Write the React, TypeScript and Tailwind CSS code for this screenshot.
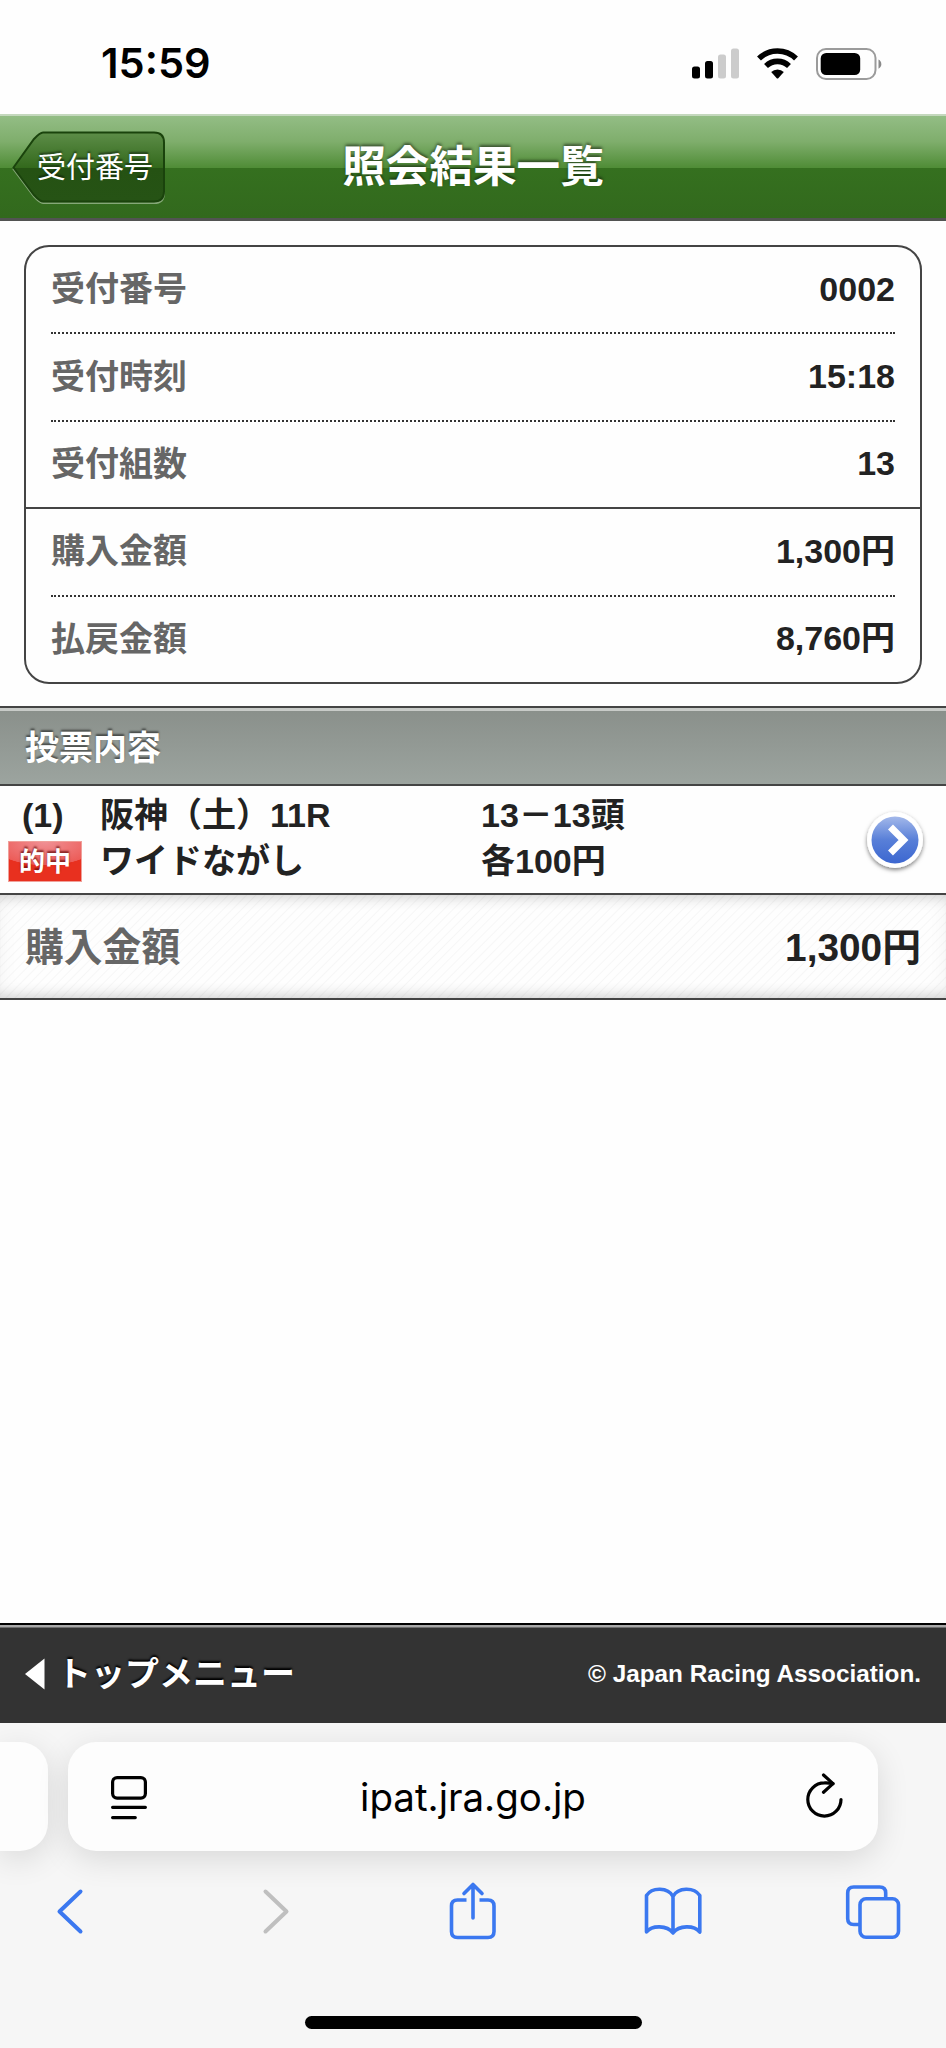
import React from 'react';

interface Row {
    label: string;
    value: string;
    line?: 'dotted' | 'solid';
}

const rows: Row[] = [
    { label: '受付番号', value: '0002', line: 'dotted' },
    { label: '受付時刻', value: '15:18', line: 'dotted' },
    { label: '受付組数', value: '13', line: 'solid' },
    { label: '購入金額', value: '1,300円', line: 'dotted' },
    { label: '払戻金額', value: '8,760円' },
];

const StatusBar: React.FC = () => (
    <div className="flex h-[114px] items-center justify-between pl-[101px] pr-[64px] pt-[13px]">
        <span className="font-['Inter',sans-serif] text-[41.500px] leading-none font-semibold text-black">15:59</span>
        <div className="flex items-center gap-[18px]">
            <svg width="47" height="31" viewBox="0 0 47 31">
                <rect x="0" y="18.5" width="8" height="12" rx="2.5" fill="#000" />
                <rect x="13" y="13" width="8" height="17.5" rx="2.5" fill="#000" />
                <rect x="26" y="6.5" width="8" height="24" rx="2.5" fill="#ccc" />
                <rect x="39" y="0.5" width="8" height="30" rx="2.5" fill="#ccc" />
            </svg>
            <svg width="41" height="31" viewBox="0 0 41 31">
                <path d="M2 10.5a26.5 26.5 0 0 1 37 0" fill="none" stroke="#000" strokeWidth="5.6" />
                <path d="M9 18a16.5 16.5 0 0 1 23 0" fill="none" stroke="#000" strokeWidth="5.6" />
                <path d="M14.2 24a9 9 0 0 1 12.6 0l-5.3 5.9q-1 1-2 0z" fill="#000" />
            </svg>
            <svg width="66" height="32" viewBox="0 0 66 32">
                <rect x="1" y="1" width="58.5" height="30" rx="9" fill="none" stroke="#9b9b9b" strokeWidth="2" />
                <rect x="4.7" y="5" width="39.5" height="22" rx="5.5" fill="#000" />
                <path d="M62.500 11.500c3.800 1.600 3.800 7.600 0 9.200z" fill="#8a8a8a" />
            </svg>
        </div>
    </div>
);

const Header: React.FC = () => (
    <header className="grid h-[107px] grid-cols-[160px_1fr_160px] items-center border-t-2 border-b-3 border-t-[#c4d8bd] border-b-[#525352] bg-[linear-gradient(#93bd85_0%,#7fae6c_25%,#4f8c36_51%,#35701f_51%,#32691d_100%)] px-[12px]">
        <button className="relative mt-px flex h-[74px] w-[154px] items-center">
            <svg className="absolute inset-0" width="154" height="74" viewBox="0 0 154 74">
                <defs>
                    <linearGradient id="back" x1="0" y1="0" x2="0" y2="1">
                        <stop offset="0" stopColor="#5d8d48" />
                        <stop offset="0.51" stopColor="#33691c" />
                        <stop offset="0.52" stopColor="#255213" />
                        <stop offset="1" stopColor="#265315" />
                    </linearGradient>
                </defs>
                <path
                    d="M1.5 36.5L22 8Q28 1.5 31 1.5H142Q152 1.5 152 11.5V60.5Q152 70.500 142 70.500H31Q28 70.500 22 64z"
                    transform="translate(0 1.7)"
                    fill="none"
                    stroke="#86a878"
                    strokeWidth="1.8"
                />
                <path
                    d="M1.5 36.5L22 8Q28 1.5 31 1.5H142Q152 1.5 152 11.5V60.5Q152 70.500 142 70.500H31Q28 70.500 22 64z"
                    fill="url(#back)"
                    stroke="#1a430c"
                    strokeWidth="2"
                />
            </svg>
            <span className="relative pt-px pl-[25px] text-[29px] leading-none text-white [text-shadow:0_-2px_2px_rgba(0,0,0,0.5)]">受付番号</span>
        </button>
        <h1 className="pt-px text-center text-[43.600px] leading-none font-bold text-white [text-shadow:0_-2px_3px_rgba(0,0,0,0.5)]">照会結果一覧</h1>
    </header>
);

const Summary: React.FC = () => (
    <div className="mx-[24px] mt-[24px] h-[439px] rounded-[25px] border-2 border-[#444]">
        {rows.map(row => (
            <div key={row.label} className={row.line === 'solid' ? 'border-b-2 border-[#444]' : ''}>
                <div
                    className={`mx-[25px] flex items-center justify-between text-[34px] leading-none font-bold ${
                        row.line === 'dotted' ? 'h-[87.400px] border-b-2 border-dotted border-[#333]' : 'h-[85.400px]'
                    }`}
                >
                    <span className="pb-px text-[#666]">{row.label}</span>
                    <span className="pb-[2px] text-[#222]">{row.value}</span>
                </div>
            </div>
        ))}
    </div>
);

const Ticket: React.FC = () => (
    <div className="flex h-[109px] border-b-2 border-[#444] text-[34px] leading-[46px] font-bold text-[#222]">
        <div className="flex w-[100px] flex-col pt-[6px]">
            <span className="pl-[22px]">(1)</span>
            <span className="mt-[3px] ml-[8px] flex h-[41px] w-[74px] items-center justify-center border border-[#f0a09a] bg-[radial-gradient(ellipse_75%_60%_at_50%_0%,#f09094_0%,#ec5c58_98%,#e8301f_100%)] text-[26px] leading-none text-white [text-shadow:0_-2px_2px_rgba(90,0,0,0.7)]">
                的中
            </span>
        </div>
        <div className="flex w-[381px] flex-col pt-[6px]">
            <span>阪神（土）11R</span>
            <span>ワイドながし</span>
        </div>
        <div className="flex flex-1 flex-col pt-[6px]">
            <span>13－13頭</span>
            <span>各100円</span>
        </div>
        <div className="flex items-center pt-[2px] pr-[18px]">
            <svg width="66" height="70" viewBox="0 0 66 70">
                <defs>
                    <linearGradient id="go" x1="0" y1="0" x2="0" y2="1">
                        <stop offset="0" stopColor="#a3b8ea" />
                        <stop offset="0.5" stopColor="#587fd8" />
                        <stop offset="1" stopColor="#3c67d0" />
                    </linearGradient>
                    <filter id="drop" x="-20%" y="-20%" width="140%" height="150%">
                        <feDropShadow dx="0" dy="2" stdDeviation="2" floodColor="#000" floodOpacity="0.5" />
                    </filter>
                </defs>
                <circle cx="33" cy="34" r="28" fill="#fff" filter="url(#drop)" />
                <circle cx="33" cy="34" r="23.5" fill="url(#go)" />
                <path d="M28.5 21l13 13-13 13" fill="none" stroke="#fff" strokeWidth="7" />
            </svg>
        </div>
    </div>
);

const AddressBar: React.FC = () => (
    <div className="mt-[19px] flex gap-[20px] font-['Inter',sans-serif] text-black">
        <div className="h-[109px] w-[48px] rounded-r-[28px] bg-[#fdfdfd] shadow-[0_8px_32px_rgba(0,0,0,0.12)]" />
        <div className="flex h-[109px] w-[810px] items-center justify-between rounded-[28px] bg-[#fdfdfd] pr-[32px] pl-[41px] shadow-[0_8px_32px_rgba(0,0,0,0.12)]">
            <svg width="40" height="50" viewBox="0 0 40 50" fill="none" stroke="currentColor" strokeWidth="3.2" strokeLinecap="round">
                <rect x="3.6" y="5.600" width="32.8" height="20.5" rx="4.5" />
                <path d="M3.6 35.3H36.400M3.6 45.6H26.300" />
            </svg>
            <span className="pt-px pr-[5px] text-[38.500px] leading-none">ipat.jra.go.jp</span>
            <svg width="44" height="54" viewBox="0 0 44 54" fill="none" stroke="currentColor" strokeWidth="3.2" strokeLinecap="round" strokeLinejoin="round">
                <path d="M39 29.5A16.6 16.6 0 1 1 22.4 12.9Q26.500 12.7 31 13.6" />
                <path d="M21.5 5L31 13.6l-9.500 8.6" />
            </svg>
        </div>
    </div>
);

const Toolbar: React.FC = () => (
    <nav className="mt-[30px] flex justify-between px-[43px] text-[#3b78f0]">
        <svg width="60" height="60" viewBox="0 0 60 60" fill="none" stroke="currentColor" strokeWidth="4" strokeLinecap="round" strokeLinejoin="round">
            <path d="M37.5 10.500L16.5 30.500l21 20" />
        </svg>
        <svg width="60" height="60" viewBox="0 0 60 60" fill="none" stroke="#bfbfbf" strokeWidth="4" strokeLinecap="round" strokeLinejoin="round">
            <path d="M22.5 10.500l21 20-21 20" />
        </svg>
        <svg width="60" height="60" viewBox="0 0 60 60" fill="none" stroke="currentColor" strokeWidth="3.6">
            <path d="M23.500 19H14.500Q8.500 19 8.500 25V50.500Q8.500 56.500 14.500 56.500H45Q51 56.500 51 50.500V25Q51 19 45 19H36.500" />
            <path d="M30 4V37M21 12.5L30 3.500l9 9" strokeLinecap="round" strokeLinejoin="round" />
        </svg>
        <svg width="60" height="60" viewBox="0 0 60 60" fill="none" stroke="currentColor" strokeWidth="3.6" strokeLinecap="round" strokeLinejoin="round">
            <path d="M30 15.500C25 6 9 6 3.5 14.500V51C9 44 24 44 30 52C36 44 51 44 56.8 51V14.500C51 6 35 6 30 15.500V51.500" />
        </svg>
        <svg width="60" height="60" viewBox="0 0 60 60" fill="none" stroke="currentColor" strokeWidth="3.6">
            <rect x="17" y="17.7" width="38.500" height="38.500" rx="6" />
            <path d="M42.7 17.500V12Q42.7 6 36.7 6H10.7Q4.7 6 4.7 12V37.500Q4.7 43.500 10.7 43.500H17" />
        </svg>
    </nav>
);

const App: React.FC = () => {
    return (
        <div className="flex h-[2048px] w-[946px] flex-col overflow-hidden bg-[#fefefe] font-['Liberation_Sans','Noto_Sans_CJK_JP',sans-serif]">
            <StatusBar />
            <Header />
            <main className="flex h-[1402px] flex-col">
                <Summary />
                <h2 className="mt-[22px] flex h-[80px] items-center border-t-2 border-b-2 border-[#444] bg-[linear-gradient(#c8cbc8_3px,#8a908b_3px,#9ca49f)] pt-[3px] pl-[25px] text-[34px] leading-none font-bold text-white [text-shadow:0_-2px_2px_rgba(0,0,0,0.5)]">
                    投票内容
                </h2>
                <Ticket />
                <div className="flex h-[105px] items-center justify-between border-b-2 border-[#444] bg-[repeating-linear-gradient(135deg,transparent_0_4.5px,rgba(0,0,0,0.03)_5.5px,transparent_6.5px)] px-[25px] pt-[4px] text-[38.800px] leading-none font-bold shadow-[inset_0_14px_14px_-12px_rgba(0,0,0,0.16),inset_0_-14px_14px_-12px_rgba(0,0,0,0.16),inset_0_0_20px_rgba(0,0,0,0.05)]">
                    <span className="text-[#666]">購入金額</span>
                    <span className="text-[#222]">1,300円</span>
                </div>
            </main>
            <footer className="flex h-[100px] items-center justify-between border-t-2 border-black bg-[linear-gradient(#a8a8a8_2px,#333_3px)] px-[25px] font-bold text-white">
                <a className="flex items-center gap-[12px]">
                    <svg width="20" height="32" viewBox="0 0 20 32">
                        <path d="M19.5 0.5V31.5L0 16z" fill="#fff" />
                    </svg>
                    <span className="text-[34px] leading-none [text-shadow:0_-2px_2px_#000]">トップメニュー</span>
                </a>
                <span className="text-[24.300px] leading-none">© Japan Racing Association.</span>
            </footer>
            <div className="flex flex-1 flex-col overflow-hidden bg-[#f6f6f6]">
                <AddressBar />
                <Toolbar />
                <div className="mt-auto mb-[19px] ml-[305px] h-[13px] w-[337px] rounded-full bg-black" />
            </div>
        </div>
    );
};

export default App;
